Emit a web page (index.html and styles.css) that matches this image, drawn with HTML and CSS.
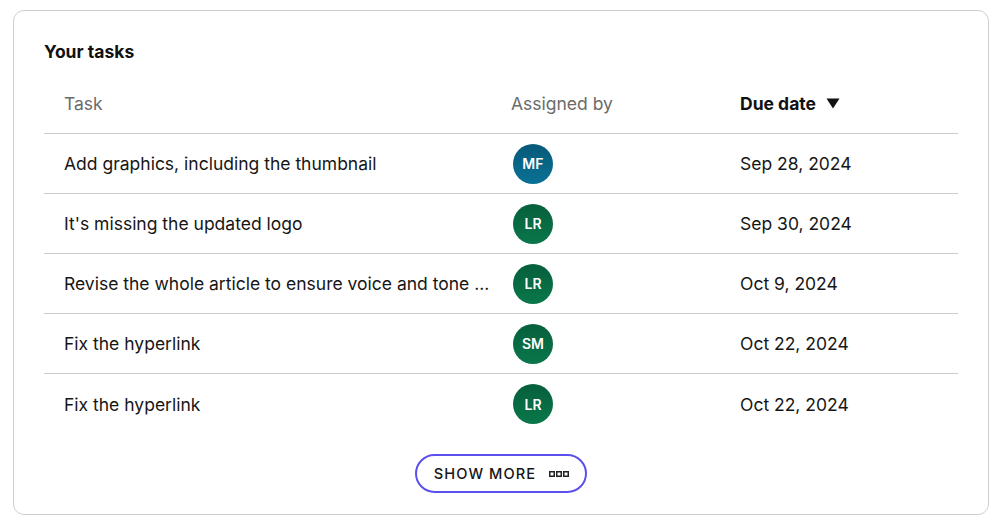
FILE: index.html
```html
<!DOCTYPE html>
<html lang="en">
<head>
<meta charset="utf-8">
<title>Your tasks</title>
<link rel="stylesheet" href="styles.css">
</head>
<body>
<section class="card">
  <h2 class="title">Your tasks</h2>
  <div class="table">
    <div class="row head">
      <div class="cell task">Task</div>
      <div class="cell by">Assigned by</div>
      <div class="cell due sorted">Due date
        <svg class="caret" width="14" height="11" viewBox="0 0 14 11"><path d="M0.5 0.5 L13.5 0.5 L7 10.5 Z" fill="#111"/></svg>
      </div>
    </div>
    <div class="row">
      <div class="cell task">Add graphics, including the thumbnail</div>
      <div class="cell by"><span class="avatar blue">MF</span></div>
      <div class="cell due">Sep 28, 2024</div>
    </div>
    <div class="row">
      <div class="cell task">It's missing the updated logo</div>
      <div class="cell by"><span class="avatar green">LR</span></div>
      <div class="cell due">Sep 30, 2024</div>
    </div>
    <div class="row">
      <div class="cell task">Revise the whole article to ensure voice and tone ...</div>
      <div class="cell by"><span class="avatar green">LR</span></div>
      <div class="cell due">Oct 9, 2024</div>
    </div>
    <div class="row">
      <div class="cell task">Fix the hyperlink</div>
      <div class="cell by"><span class="avatar green">SM</span></div>
      <div class="cell due">Oct 22, 2024</div>
    </div>
    <div class="row last">
      <div class="cell task">Fix the hyperlink</div>
      <div class="cell by"><span class="avatar green">LR</span></div>
      <div class="cell due">Oct 22, 2024</div>
    </div>
  </div>
  <div class="more-wrap">
    <button class="more">SHOW MORE
      <svg class="dots" width="20" height="6" viewBox="0 0 20 6">
        <rect x="0.75" y="0.75" width="4.5" height="4.5" fill="none" stroke="#222" stroke-width="1.5"/>
        <rect x="7.75" y="0.75" width="4.5" height="4.5" fill="none" stroke="#222" stroke-width="1.5"/>
        <rect x="14.75" y="0.75" width="4.5" height="4.5" fill="none" stroke="#222" stroke-width="1.5"/>
      </svg>
    </button>
  </div>
</section>
</body>
</html>
```

FILE: styles.css
```css
* { box-sizing: border-box; }
html, body { background: #fff; }
body {
  margin: 10px 11px 0 13px;
  font-family: Inter, "Noto Sans", "Liberation Sans", sans-serif;
  color: #161616;
}
.card {
  border: 1px solid #cfcfcf;
  border-radius: 11px;
  height: 505px;
  padding: 30px 30px 0 30px;
}
.title {
  margin: 0;
  font-size: 17.5px;
  font-weight: 700;
  line-height: 22px;
  color: #111;
}
.table {
  margin-top: 11px;
}
.row {
  display: grid;
  grid-template-columns: 447px 229px 1fr;
  height: 60px;
  align-items: center;
  border-bottom: 1px solid #cccccc;
  font-size: 17.5px;
}
.row.last { border-bottom: none; }
.row.head { color: #6b6b6b; }
.cell { padding-left: 20px; white-space: nowrap; }
.cell.task { overflow: hidden; text-overflow: clip; }
.cell.by { display: flex; align-items: center; }
.sorted { color: #111; font-weight: 700; display: flex; align-items: center; }
.caret { margin-left: 10px; }
.avatar {
  display: inline-flex;
  width: 40px;
  height: 40px;
  border-radius: 50%;
  margin-left: 2px;
  align-items: center;
  justify-content: center;
  color: #fff;
  font-size: 14px;
  font-weight: 600;
  letter-spacing: 0.1px;
}
.avatar.blue { background: linear-gradient(180deg, #075a78 0%, #0a7195 100%); }
.avatar.green { background: linear-gradient(180deg, #065f3c 0%, #0a774a 100%); }
.more-wrap {
  display: flex;
  justify-content: center;
  margin-top: 20px;
}
.more {
  display: flex;
  align-items: center;
  height: 39px;
  padding: 0 16px 0 17px;
  border: 2px solid #5b50ec;
  border-radius: 20px;
  background: #fff;
  font-family: Inter, "Noto Sans", "Liberation Sans", sans-serif;
  font-size: 14.6px;
  font-weight: 500;
  letter-spacing: 1.1px;
  color: #161616;
}
.dots { margin-left: 13px; }
```
